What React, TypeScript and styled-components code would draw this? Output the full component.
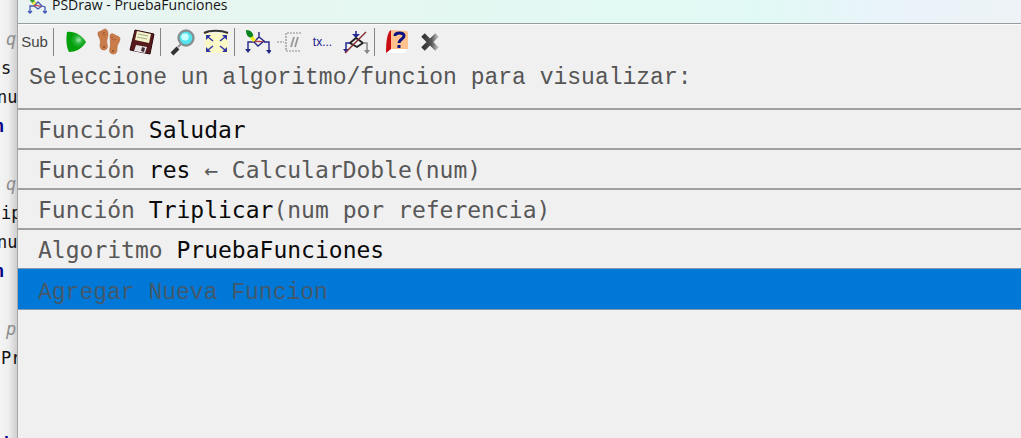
import React from "react";
import styled, { createGlobalStyle } from "styled-components";

const GlobalStyle = createGlobalStyle`
  * { box-sizing: border-box; }
  html, body { margin: 0; }
  body { background: #f0f0f0; font-family: "Open Sans", sans-serif; overflow: hidden; }
`;

const Desktop = styled.div`
  display: flex;
  min-height: 100vh;
`;

const Editor = styled.aside`
  flex: 0 0 17px;
  height: 100vh;
  overflow: hidden;
  padding-top: 25px;
  background: linear-gradient(to right, #f4f4f4, #eeeeee 50%, #cfcfcf);
`;

const tones = {
  code: "#111111",
  keyword: "#00008b",
  comment: "#8c8c8c",
};

const CodeLine = styled.div<{ $tone: keyof typeof tones; $start: number }>`
  height: 29px;
  line-height: 29px;
  margin-left: ${(p) => p.$start}px;
  white-space: pre;
  font-family: "DejaVu Sans Mono", monospace;
  font-size: 17px;
  color: ${(p) => tones[p.$tone]};
  font-weight: ${(p) => (p.$tone === "keyword" ? 700 : 400)};
  font-style: ${(p) => (p.$tone === "comment" ? "italic" : "normal")};
`;

const Window = styled.main`
  flex: 1;
  min-width: 0;
  background: #f0f0f0;
  border-left: 1px solid #a6a6a6;
`;

const TitleBar = styled.header`
  display: flex;
  align-items: flex-end;
  gap: 5px;
  height: 24px;
  padding: 0 0 8px 9px;
  overflow: hidden;
  background: linear-gradient(to right, #e9f3f2, #e5f7f0 30%, #e1f9f5 74%, #e9f3fa 87%, #edf3f6);
  border-bottom: 1px solid #979d9d;
`;

const Title = styled.h1`
  margin: 0;
  font-size: 14px;
  font-weight: 400;
  line-height: 20px;
  color: #151515;
`;

const Toolbar = styled.div`
  display: flex;
  align-items: center;
  height: 34px;
  border-top: 1px solid #fbfbfb;
`;

const ToolButton = styled.button`
  display: flex;
  align-items: center;
  justify-content: center;
  width: 33px;
  height: 33px;
  padding: 0;
  border: 0;
  background: transparent;
`;

const SubLabel = styled.span`
  font-family: "Liberation Sans Narrow", "Liberation Sans", sans-serif;
  font-size: 15px;
  font-weight: 400;
  color: #444444;
`;

const EllipsisLabel = styled.span`
  font-family: "Liberation Sans", sans-serif;
  font-size: 12px;
  color: #20208c;
`;

const Separator = styled.span`
  width: 8px;
  height: 28px;
  background: linear-gradient(#858585, #858585) 2px 0 / 1px 100% no-repeat;
`;

const Prompt = styled.h2`
  margin: 0;
  padding: 4px 0 0 11px;
  height: 50px;
  font-family: "Liberation Mono", monospace;
  font-size: 23px;
  font-weight: 400;
  line-height: 32px;
  color: #555555;
  white-space: nowrap;
`;

const List = styled.ul`
  margin: 0;
  padding: 0;
  list-style: none;
`;

const Row = styled.button`
  display: block;
  width: 100%;
  height: 40px;
  padding: 0 0 0 20px;
  border: 0;
  border-top: 2px solid #a0a0a0;
  background: #f0f0f0;
  font-family: "DejaVu Sans Mono", monospace;
  font-size: 23px;
  line-height: 40px;
  text-align: left;
  white-space: pre;
  color: #585858;
`;

const SelectedRow = styled(Row)`
  height: 42px;
  border-top: 1px solid #8198ac;
  border-bottom: 1px solid #8198ac;
  background: #0078d7;
  font-family: "Liberation Mono", monospace;
  line-height: 40px;
  padding-top: 4px;
  color: #44586c;
`;

const Name = styled.span`
  color: #0a0a0a;
`;

const Icon = ({ children }: { children: React.ReactNode }) => (
  <svg width="28" height="28" viewBox="0 0 28 28" fill="none" aria-hidden="true">
    {children}
  </svg>
);

const AppIcon = () => (
  <svg width="20" height="18" viewBox="0 0 20 18" fill="none" aria-hidden="true">
    <path d="M1 1l4-1 4 6-3 1z" fill="#2f9d35" />
    <path d="M5 6l3-2 2 4-3 2z" fill="#f1e94a" />
    <path d="M7 9l4-4 4 4-4 3zM7 9H3v7M15 9l3 1v6M1 14l2 2 2-2M16 14l2 2 2-2" stroke="#4358b8" strokeWidth="1.3" />
    <path d="M7 9c3-2 5 1 7 0" stroke="#c34444" strokeWidth="1.3" />
  </svg>
);

const PlayIcon = () => (
  <Icon>
    <defs>
      <radialGradient id="play" cx=".62" cy=".4" r=".4">
        <stop offset="0" stopColor="#a4e8b0" />
        <stop offset=".5" stopColor="#28b437" />
        <stop offset="1" stopColor="#04a00b" />
      </radialGradient>
    </defs>
    <path d="M5 4c7-1 15 3 19 10-4 7-11 10-17 10-3-5-3-14-2-20z" fill="url(#play)" />
  </Icon>
);

const FeetIcon = () => (
  <Icon>
    <g fill="#c97b4a" stroke="#b0683b" strokeWidth=".6">
      <path d="M3 5c0-2 2-1 3-2 2-1 3-2 4-2 2 0 3 3 3 5 0 4-2 6-1 10 1 3 0 6-3 6s-4-2-4-5c1-4 0-6-1-8-1-1-1-3-1-4z" />
      <path d="M15 8c0-2 2-3 3-2 2 1 3 1 4 2 2 0 3 2 3 3 0 3-3 5-3 9 0 3 0 6-4 6-3 0-4-3-3-6 1-4 0-8 0-12z" />
    </g>
    <path d="M7 6c2 1 3 1 4 0M17 11c2 1 3 1 4 0" stroke="#a95f35" />
    <path d="M9 4v1M9 18v2M17 9v1M18 22v2" stroke="#7d4224" strokeWidth="1.3" />
  </Icon>
);

const SaveIcon = () => (
  <Icon>
    <path d="M7 2l19 4-4 20-20-4z" fill="#571b1d" stroke="#2d090b" />
    <path d="M9 3l14 3-2 9-14-3z" fill="#f3f2cf" />
    <path d="M10 6l10 2M9 9l10 2" stroke="#a7ad83" />
    <path d="M8 17l11 2-2 6-11-2z" fill="#e6e3e6" />
    <path d="M14 19l3 1-1 4-3-1z" fill="#402b35" />
  </Icon>
);

const ZoomIcon = () => (
  <Icon>
    <path d="M3 26l6-6" stroke="#333333" strokeWidth="4" />
    <path d="M9 19l3-3" stroke="#929292" strokeWidth="2" />
    <circle cx="17" cy="10" r="7.5" fill="#54e4ee" stroke="#858f90" strokeWidth="2.3" />
    <ellipse cx="16" cy="9" rx="3.8" ry="3.4" fill="#c9ffff" />
  </Icon>
);

const FitIcon = () => (
  <Icon>
    <path d="M3 5h23v20H3z" fill="#fbf8c8" />
    <path d="M2 5c6-3 17-3 24 0" stroke="#333333" strokeWidth="2" />
    <path d="M11 13L6 9M18 13l5-4M11 18l-5 4M18 18l5 4" stroke="#3035a5" strokeWidth="1.5" />
    <path d="M4 7h5l-5 5zM25 7h-5l5 5zM4 24v-5l5 5zM25 24v-5l-5 5z" fill="#3035a5" />
  </Icon>
);

const DrawIcon = () => (
  <Icon>
    <path d="M16 4v5M11 14l5-5 5 4-6 5zM11 14H5v9M21 14h5v10" stroke="#252985" strokeWidth="1.4" />
    <path d="M2 21h6l-3 4zM23 22h6l-3 4z" fill="#252985" />
    <path d="M12 14c3-2 5 1 8-1" stroke="#bb3737" strokeWidth="1.4" />
    <path d="M3 2c5 0 8 3 7 8-5 0-7-3-7-8z" fill="#08831c" />
    <path d="M7 10l3-2 3 4-3 2z" fill="#f2ed25" />
  </Icon>
);

const CommentIcon = () => (
  <Icon>
    <path d="M1 14h7M25 5H10v18h15" stroke="#8b8b8b" strokeWidth="1.2" strokeDasharray="2 1" />
    <path d="M18 9l-3 10M22 9l-3 10" stroke="#999999" strokeWidth="1.8" />
  </Icon>
);

const NoDrawIcon = () => (
  <Icon>
    <path d="M14 3v6" stroke="#242a91" strokeWidth="1.6" />
    <path d="M10 6h8l-4 4z" fill="#242a91" />
    <path d="M8 15l6-5 7 5-6 4z" stroke="#222222" strokeWidth="1.8" />
    <path d="M8 15H4v8" stroke="#242a91" strokeWidth="1.5" />
    <path d="M1 21h6l-3 4z" fill="#242a91" />
    <path d="M21 15h4v9" stroke="#858585" strokeWidth="1.5" />
    <path d="M22 22h6l-3 4z" fill="#858585" />
    <path d="M3 25L24 4" stroke="#853036" strokeWidth="1.4" />
  </Icon>
);

const HelpIcon = () => (
  <Icon>
    <path d="M8 2C4 4 3 15 3 25l5-4z" fill="#c90b12" />
    <path d="M8 2l15 1q2 0 2 2v16H8z" fill="#ffc18d" />
    <path d="M4 25l5-4h15q-1 4-4 4z" fill="#ffffff" />
    <path d="M12 8c0-4 9-4 9 0 0 3-5 3-5 7M16 17v3" stroke="#0b1180" strokeWidth="3" />
  </Icon>
);

const CloseIcon = () => (
  <Icon>
    <defs>
      <linearGradient id="cross" x1="0" y1="0" x2="1" y2="0">
        <stop offset="0" stopColor="#343434" />
        <stop offset=".6" stopColor="#555555" />
        <stop offset="1" stopColor="#b4b4b4" />
      </linearGradient>
    </defs>
    <path d="M7 7l14 14M21 7L7 21" stroke="url(#cross)" strokeWidth="5" />
  </Icon>
);

const codeLines: { text: string; tone: keyof typeof tones; start: number }[] = [
  { text: "q", tone: "comment", start: 6 },
  { text: "s", tone: "code", start: 1 },
  { text: "nu", tone: "code", start: -3 },
  { text: "n", tone: "keyword", start: -6 },
  { text: " ", tone: "code", start: 1 },
  { text: "q", tone: "comment", start: 6 },
  { text: "ip", tone: "code", start: 1 },
  { text: "nu", tone: "code", start: -3 },
  { text: "n", tone: "keyword", start: -6 },
  { text: " ", tone: "code", start: 1 },
  { text: "p", tone: "comment", start: 6 },
  { text: "Pr", tone: "code", start: 1 },
  { text: " ", tone: "code", start: 1 },
  { text: " ", tone: "code", start: 1 },
  { text: "i", tone: "keyword", start: 1 },
];

export default function App() {
  return (
    <>
      <GlobalStyle />
      <Desktop>
        <Editor>
          {codeLines.map((line, i) => (
            <CodeLine key={i} $tone={line.tone} $start={line.start}>
              {line.text}
            </CodeLine>
          ))}
        </Editor>
        <Window>
          <TitleBar>
            <AppIcon />
            <Title>PSDraw - PruebaFunciones</Title>
          </TitleBar>
          <Toolbar role="toolbar">
            <ToolButton><SubLabel>Sub</SubLabel></ToolButton>
            <Separator />
            <ToolButton aria-label="Ejecutar"><PlayIcon /></ToolButton>
            <ToolButton aria-label="Paso a paso"><FeetIcon /></ToolButton>
            <ToolButton aria-label="Guardar"><SaveIcon /></ToolButton>
            <Separator />
            <ToolButton aria-label="Zoom"><ZoomIcon /></ToolButton>
            <ToolButton aria-label="Ajustar"><FitIcon /></ToolButton>
            <Separator />
            <ToolButton aria-label="Estilo"><DrawIcon /></ToolButton>
            <ToolButton aria-label="Comentarios"><CommentIcon /></ToolButton>
            <ToolButton><EllipsisLabel>tx...</EllipsisLabel></ToolButton>
            <ToolButton aria-label="Sintaxis"><NoDrawIcon /></ToolButton>
            <Separator />
            <ToolButton aria-label="Ayuda"><HelpIcon /></ToolButton>
            <ToolButton aria-label="Cerrar"><CloseIcon /></ToolButton>
          </Toolbar>
          <Prompt>Seleccione un algoritmo/funcion para visualizar:</Prompt>
          <List>
            <li><Row>Función <Name>Saludar</Name></Row></li>
            <li><Row>Función <Name>res</Name> ← CalcularDoble(num)</Row></li>
            <li><Row>Función <Name>Triplicar</Name>(num por referencia)</Row></li>
            <li><Row>Algoritmo <Name>PruebaFunciones</Name></Row></li>
            <li><SelectedRow>Agregar Nueva Funcion</SelectedRow></li>
          </List>
        </Window>
      </Desktop>
    </>
  );
}
